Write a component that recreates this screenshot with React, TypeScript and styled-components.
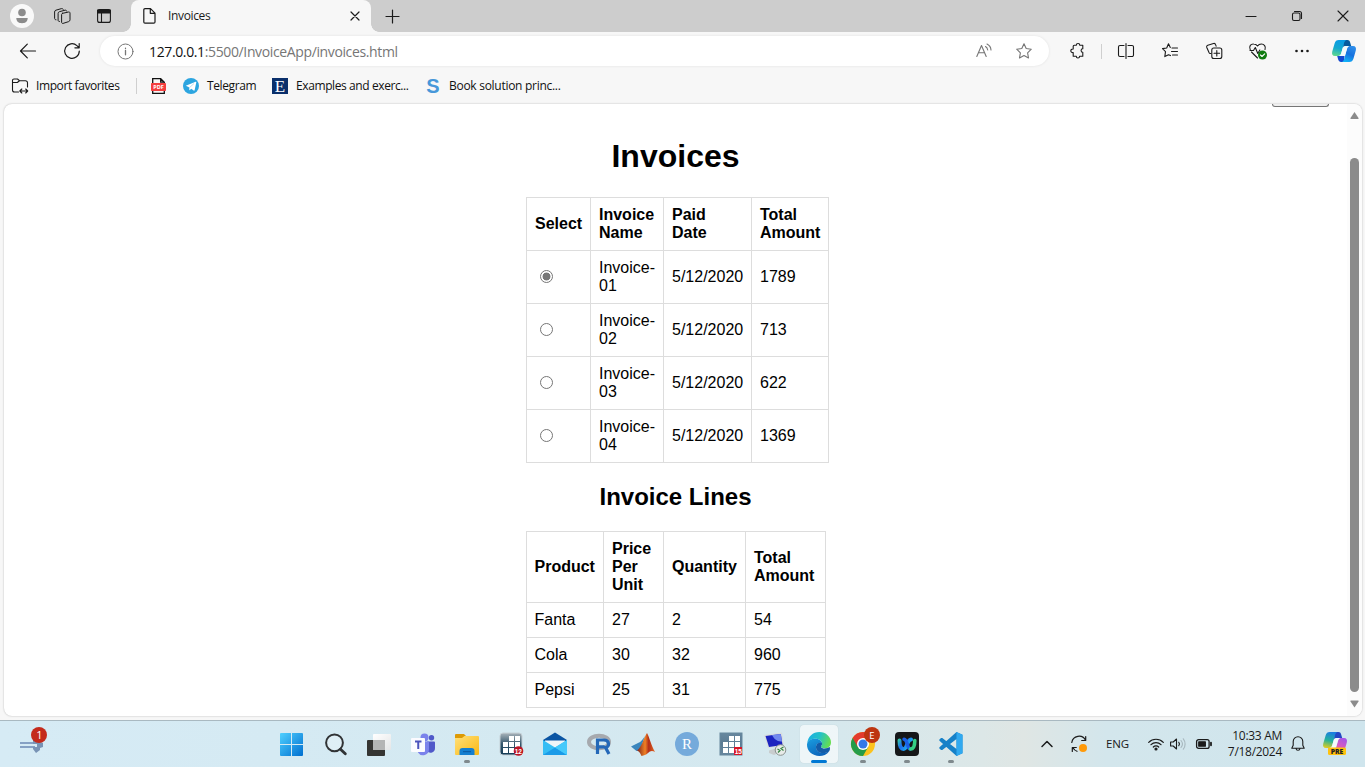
import React from 'react';
import styled, { createGlobalStyle } from 'styled-components';

const Global = createGlobalStyle`
  * { box-sizing: border-box; }
  html, body { margin: 0; padding: 0; overflow: hidden; }
  body { font-family: "Open Sans", "Noto Sans", sans-serif; font-size: 12px; color: #1b1b1b; background: #f7f7f7; }
  svg { display: block; overflow: visible; }
`;

const Screen = styled.div`
  width: 1365px;
  height: 767px;
  display: flex;
  flex-direction: column;
  background: #f7f7f7;
`;

const TabStrip = styled.header`
  height: 32px;
  background: #cdcdcd;
  display: flex;
  flex: none;
`;

const Cell = styled.div<{ $w: number }>`
  width: ${(p) => p.$w}px;
  height: 100%;
  flex: none;
  display: flex;
  align-items: center;
  justify-content: center;
`;

const Tab = styled.div`
  position: relative;
  width: 240px;
  background: #f7f7f7;
  border-radius: 8px 8px 0 0;
  display: flex;
  align-items: center;
  padding: 0 9px 0 12px;
  flex: none;
  &::before, &::after {
    content: '';
    position: absolute;
    bottom: 0;
    width: 8px;
    height: 8px;
  }
  &::before { left: -8px; background: radial-gradient(circle at 0 0, transparent 7.5px, #f7f7f7 8px); }
  &::after { right: -8px; background: radial-gradient(circle at 100% 0, transparent 7.5px, #f7f7f7 8px); }
`;

const Label = styled.span<{ $track?: number; $size?: number }>`
  font-size: ${(p) => p.$size ?? 12}px;
  letter-spacing: ${(p) => p.$track ?? 0}px;
  line-height: 16px;
  padding-bottom: 1px;
  white-space: nowrap;
`;

const TabTitle = styled(Label)`
  margin-left: 12px;
  flex: 1;
`;

const Spacer = styled.div`
  flex: 1;
`;

const Toolbar = styled.div`
  height: 38px;
  display: flex;
  align-items: center;
  flex: none;
  padding-left: 6px;
`;

const AddressBar = styled.div`
  width: 949px;
  height: 30px;
  margin-left: 6px;
  margin-right: 6px;
  border-radius: 15px;
  background: #fff;
  box-shadow: 0 0 3px rgba(0, 0, 0, 0.09);
  display: flex;
  align-items: center;
  padding: 0 5px 0 17px;
  flex: none;
`;

const Url = styled.div`
  flex: 1;
  margin-left: 15px;
  font-size: 14px;
  letter-spacing: -0.37px;
  color: #767676;
  b { font-weight: 400; color: #111; }
`;

const Rule = styled.i<{ $h: number }>`
  width: 1px;
  height: ${(p) => p.$h}px;
  background: #cfcfcf;
  flex: none;
`;

const Favorites = styled.nav`
  height: 34px;
  flex: none;
  display: flex;
  align-items: center;
  padding: 0 0 2px 12px;
`;

const Favorite = styled.div<{ $w: number; $gap?: number }>`
  width: ${(p) => p.$w}px;
  flex: none;
  display: flex;
  align-items: center;
  gap: ${(p) => p.$gap ?? 8}px;
  color: #111;
`;

const PdfLink = styled.div`
  margin: 0 17px 0 14px;
`;

const Viewport = styled.main`
  width: 1358px;
  height: 612px;
  margin-left: 4px;
  flex: none;
  background: #fff;
  border-radius: 8px;
  box-shadow: 0 0 2px rgba(0, 0, 0, 0.28);
  display: flex;
  overflow: hidden;
`;

const Document = styled.div`
  flex: 1;
  display: flex;
  flex-direction: column;
  align-items: center;
  font-family: "Liberation Sans", Arial, sans-serif;
  font-size: 16px;
  line-height: 18px;
  color: #000;
`;

const ClippedButton = styled.div`
  align-self: flex-end;
  width: 57px;
  height: 3px;
  margin-right: 18px;
  border: 1px solid #767676;
  border-top: 0;
  border-radius: 0 0 3px 3px;
  background: #efefef;
`;

const Content = styled.section`
  width: 300px;
  padding-top: 31px;
`;

const Title = styled.h1`
  margin: 0 0 22px;
  text-align: center;
  font-size: 32px;
  line-height: 37px;
`;

const Subtitle = styled.h2`
  margin: 20px 0;
  text-align: center;
  font-size: 24px;
  line-height: 28px;
`;

const Grid = styled.table<{ $w: number }>`
  width: ${(p) => p.$w}px;
  table-layout: fixed;
  border-collapse: collapse;
  th, td { border: 1px solid #ddd; padding: 8px 7.5px 8px 8.5px; text-align: left; overflow-wrap: normal; }
  th:first-child { padding-left: ${(p) => (p.$w > 300 ? 8.5 : 8)}px; padding-right: 7px; }
  td:first-child { padding-left: 8px; }
`;

const Col = styled.col<{ $w: number }>`
  width: ${(p) => p.$w}px;
`;

const Radio = styled.input`
  appearance: none;
  display: block;
  width: 13px;
  height: 13px;
  margin: -1px 0 1px 5px;
  border: 1px solid #767676;
  border-radius: 50%;
  background: #fff;
  &:checked { background: radial-gradient(circle, #767676 3.6px, #fff 4.3px); }
`;

const ScrollTrack = styled.div`
  width: 15px;
  background: #fcfcfc;
  display: flex;
  flex-direction: column;
  align-items: center;
  padding: 8px 0;
`;

const Thumb = styled.div`
  width: 9px;
  height: 536px;
  margin: 38px 0 8px;
  border-radius: 5px;
  background: #8b8b8b;
`;

const Taskbar = styled.footer`
  margin-top: 4px;
  height: 47px;
  flex: none;
  border-top: 1px solid #a9b9c1;
  background: linear-gradient(90deg, #d6ebf5 0%, #d4e9f1 40%, #d5e8ee 60%, #dce7e7 72%, #dfe6e4 75%, #d3e6ec 81%, #cfe5ed 100%);
  display: flex;
`;

const WidgetArea = styled.div`
  width: 269px;
  padding: 6px 0 0 20px;
`;

const AppSlot = styled.div<{ $active?: boolean }>`
  position: relative;
  width: 38px;
  height: 38px;
  margin: 4px 3px;
  border-radius: 4px;
  background: ${(p) => (p.$active ? 'rgba(255,255,255,.6)' : 'transparent')};
  box-shadow: ${(p) => (p.$active ? '0 0 1px rgba(0,0,0,.18)' : 'none')};
  display: flex;
  align-items: center;
  justify-content: center;
`;

const Running = styled.i<{ $active?: boolean }>`
  position: absolute;
  bottom: 0;
  left: 50%;
  transform: translateX(-50%);
  width: ${(p) => (p.$active ? 16 : 6)}px;
  height: 3px;
  border-radius: 2px;
  background: ${(p) => (p.$active ? '#0078d4' : '#7f898d')};
`;

const Tray = styled.div`
  margin-left: auto;
  margin-right: 7px;
  display: flex;
`;

const Clock = styled.div`
  width: 60px;
  text-align: right;
  font-size: 12px;
  line-height: 16px;
  letter-spacing: -0.3px;
  padding-top: 7px;
  white-space: nowrap;
`;

type IconProps = { w?: number; h?: number; vb?: string; c?: string; sw?: number; children: React.ReactNode };
const Icon = ({ w = 16, h = w, vb, c = '#1b1b1b', sw = 1.1, children }: IconProps) => (
  <svg width={w} height={h} viewBox={vb ?? `0 0 ${w} ${h}`} fill="none" stroke={c} strokeWidth={sw} strokeLinecap="round" strokeLinejoin="round">
    {children}
  </svg>
);

const Profile = () => (
  <Icon w={24}>
    <g stroke="none"><circle cx="12" cy="12" r="12" fill="#f9f9f9" /><circle cx="12" cy="8.5" r="3.8" fill="#8c8c8c" />
    <path d="M6.3 14h11.4c0 3.5-2.4 5.2-5.700 5.200S6.300 17.500 6.300 14Z" fill="#8c8c8c" /></g>
  </Icon>
);
const Workspaces = () => (
  <Icon w={16} sw={1}>
    <path d="M8.600 5.300 14.600 4c.8-.2 1.400.3 1.400 1.100v6.700c0 .9-.5 1.500-1.300 1.800l-5.600 1.800c-.8.2-1.500-.3-1.500-1.200V6.700c0-.8.3-1.200 1-1.400Z" />
    <path d="M5.500 13.500c-.9 0-1.400-.5-1.400-1.300V5.500c0-1 .5-1.600 1.300-1.800l5.600-1.500c.9-.2 1.500.2 1.700.9" />
    <path d="M2 11.800c-.8 0-1.400-.5-1.400-1.300V4c0-1 .5-1.600 1.300-1.800L7.500.6c.9-.2 1.500.2 1.700.8" />
  </Icon>
);
const TabActions = () => (
  <Icon w={14}>
    <rect x=".6" y=".6" width="12.800" height="12.800" rx="2" />
    <path d="M.6 1h12.800v3H.6z" fill="#1b1b1b" /><path d="M4.500 4v9" />
  </Icon>
);
const FileIcon = () => (
  <Icon w={13} h={16} sw={1.2}><path d="M2 .7h5.500L12 5.200V14a1.200 1.200 0 0 1-1.200 1.200H2A1.200 1.200 0 0 1 .8 14V1.900C.8 1.200 1.300.7 2 .7ZM7.300.8v4.500h4.600" /></Icon>
);
const Cross = ({ s = 8, sw = 1.2 }: { s?: number; sw?: number }) => <Icon w={s} sw={sw}><path d={`M0 0L${s} ${s}M${s} 0L0 ${s}`} /></Icon>;

const CopilotMark = ({ rainbow }: { rainbow?: boolean }) => {
  const id = rainbow ? 'cr' : 'cb';
  return (
    <svg width="24" height="22" viewBox="0 0 24 22">
      <defs>
        <linearGradient id={`${id}1`} x1=".4" y1="0" x2=".2" y2="1">
          {(rainbow ? ['#1b7ee0', '#24b29b', '#e6cc1c'] : ['#0a9be4', '#14a8cf', '#62d98c']).map((s, i) => <stop key={s} offset={i / 2} stopColor={s} />)}
        </linearGradient>
        <linearGradient id={`${id}2`} x1=".7" y1="0" x2=".3" y2="1">
          {(rainbow ? ['#a455e8', '#d65bc0', '#ff7d68'] : ['#2f8eea', '#1672df', '#12b4f8']).map((s, i) => <stop key={s} offset={i / 2} stopColor={s} />)}
        </linearGradient>
      </defs>
      <path d="M11 0h4.500c1.400 0 2.200.8 2.600 2.200L19.200 6H14c-1.500 0-2.200.8-2.800 2Z" fill={rainbow ? '#2447c4' : '#075a9d'} />
      <path d="M12.500 16H5.200l1 3.600C6.700 21.300 7.500 22 9 22h3Z" fill={rainbow ? '#e858a6' : '#1548d0'} />
      <path d="M6.800 0H14.500c-1.500.5-2.200 2-2.700 4L9.300 13c-.6 2.200-1.500 3-3.300 3H3C.5 16-.4 14.200.2 11.700L2.600 3.500C3.300 1.100 4.600 0 6.800 0Z" fill={`url(#${id}1)`} />
      <path d="M17.800 6H21c2.500 0 3.500 2 2.800 4.500l-2.300 8c-.7 2.400-2 3.500-4.200 3.500H9.800c1.500-.5 2.200-2 2.700-4L15 9c.6-2.200 1.200-3 2.800-3Z" fill={`url(#${id}2)`} />
      <path d="M13.500 6h3.700c-1.400.5-1.900 1.500-2.500 3.500l-1.200 4c-.5 1.800-1.300 2.500-2.800 2.500H7c1.300-.5 1.900-1.500 2.400-3.200l1.300-4.600C11.200 6.700 12 6 13.500 6Z" fill="#f4fafb" />
    </svg>
  );
};

const CalendarApp = ({ day }: { day: string }) => {
  const old = day === '12';
  return (
    <svg width="24" height="24" viewBox="0 0 24 24">
      <defs><linearGradient id={`cal${day}`} x2="0" y2="1"><stop stopColor={old ? '#a9b4bb' : '#67879e'} /><stop offset=".5" stopColor={old ? '#36576c' : '#5b7b93'} /><stop offset="1" stopColor={old ? '#123a55' : '#67879e'} /></linearGradient></defs>
      <rect x="1" y="1" width="22" height="22" rx={old ? 3 : 0} fill={`url(#cal${day})`} stroke={old ? '#c5d0d6' : '#67879e'} />
      {[[10, 4], [16, 4], [4, 10], [10, 10], [16, 10], [4, 16], [10, 16]].map(([x, y]) => <rect key={`${x}-${y}`} x={x} y={y} width="5" height="5" fill="#fff" />)}
      {old ? <circle cx="19.500" cy="19" r="4.800" fill="#bd1525" /> : <rect x="15" y="15" width="8" height="8" fill="#d91525" />}
      <text x="19.300" y="21.500" textAnchor="middle" fontSize="6.500" fontWeight="700" fill="#fff" fontFamily="Liberation Sans">{day}</text>
    </svg>
  );
};

const Windows = () => (
  <svg width="23" height="23" viewBox="0 0 23 23"><defs><linearGradient id="win" x2="1" y2="1"><stop stopColor="#4fd0ff" /><stop offset="1" stopColor="#006fd0" /></linearGradient></defs>
    <path d="M1 0h10v11H0V1a1 1 0 0 1 1-1ZM12 0h10a1 1 0 0 1 1 1v10H12ZM0 12h11v11H1a1 1 0 0 1-1-1ZM12 12h11v10a1 1 0 0 1-1 1H12Z" fill="url(#win)" /></svg>
);
const Search = () => <Icon w={23} c="#303335" sw={2}><circle cx="10.500" cy="9.800" r="8.400" fill="rgba(255,255,255,.25)" /><path d="m16.500 16.200 4.800 4.500" strokeWidth="2.900" /></Icon>;
const TaskView = () => (
  <svg width="24" height="23"><defs><linearGradient id="tv" x2="1" y2="1"><stop stopColor="#fff" /><stop offset="1" stopColor="#e4e6e7" /></linearGradient></defs>
    <rect y="7" width="18" height="16" rx="1" fill="#353533" /><rect x="6" y="1" width="18" height="16" rx="1" fill="url(#tv)" /><path d="M6 7h12v10H6z" fill="#b4b5b5" /></svg>
);
const Teams = () => (
  <svg width="24" height="23"><circle cx="20.500" cy="4.800" r="2.700" fill="#5059c9" /><circle cx="13.500" cy="4.500" r="4" fill="#7b83eb" />
    <path d="M16 8.500h7a1 1 0 0 1 1 1V15a4.500 4.500 0 0 1-8 3Z" fill="#5059c9" /><path d="M8 8.500h10V16a6 6 0 0 1-11 3.500Z" fill="#7b83eb" />
    <rect y="5" width="14" height="14" rx="1" fill="#fbfbff" /><path d="M4 8.500h6.500M7.250 8.500V16" stroke="#4b53bc" strokeWidth="2" fill="none" /></svg>
);
const Explorer = () => (
  <svg width="24" height="23"><defs><linearGradient id="fo" x2="1" y2="1"><stop stopColor="#ffe07a" /><stop offset="1" stopColor="#fbb813" /></linearGradient></defs>
    <path d="M1 1h8l2 2v4H0V2a1 1 0 0 1 1-1Z" fill="#dd9a05" /><path d="M0 5h7l2.500-2H23a1 1 0 0 1 1 1v17a1 1 0 0 1-1 1H1a1 1 0 0 1-1-1Z" fill="url(#fo)" />
    <path d="M4.500 22v-4a3 3 0 0 1 3-3h9a3 3 0 0 1 3 3v4Z" fill="#147fd0" /><path d="M8 18.700h8" stroke="#0b579f" /></svg>
);
const Mail = () => (
  <svg width="24" height="24"><path d="M0 8 12 .5 24 8v5H0Z" fill="#0b55a3" /><path d="M2 8.500h20V15H2Z" fill="#f1f5f8" /><path d="m0 8 12 7.500L24 8v15H0Z" fill="#36bdf4" /><path d="m0 23 12-7.500L24 23Z" fill="#1b9be8" /><path d="m24 8-12 7.500L24 23Z" fill="#46c9fb" /></svg>
);
const RLang = () => (
  <svg width="25" height="20"><ellipse cx="12" cy="8" rx="10" ry="6.300" fill="none" stroke="#a6a9ae" strokeWidth="4" /><path d="M10.500 20V6h6.300c6 0 6 7 1.700 7.500L22 20M11 12.800h6.500" fill="none" stroke="#2468b8" strokeWidth="3.200" /></svg>
);
const Matlab = () => (
  <svg width="24" height="23"><defs><linearGradient id="ml" x2="1"><stop stopColor="#7d211b" /><stop offset=".45" stopColor="#ef8124" /><stop offset=".65" stopColor="#b22d18" /><stop offset="1" stopColor="#e66a22" /></linearGradient></defs>
    <path d="M0 13.500 7 10c3-1 5-4 7-7L9 17l-3.500 1Z" fill="#3a86bd" /><path d="M16 0c2 3 4 12 8 19-3-2-5-1-7 1-2 2-4 2.500-6.500 3C9 19.500 8 18.500 6 17.500 11 14 13 4 16 0Z" fill="url(#ml)" /></svg>
);
const RStudio = () => (
  <svg width="24" height="24"><circle cx="12" cy="12" r="12" fill="#75aadb" /><text x="12" y="17" textAnchor="middle" fontFamily="Liberation Serif" fontSize="15" fill="#fff">R</text></svg>
);
const Remote = () => (
  <svg width="24" height="24"><path d="m1 3 18-2.500 2 13L5 16Z" fill="#d8dddf" /><path d="m2.500 4 15.300-2.100L19.500 13 6 15Z" fill="#1c24c0" /><path d="m9 3.100 8.800-1.200 1.200 7.600C14 10 11 7 9 3.100Z" fill="#7189ef" /><path d="m6 18.500 8-2.500 6 3-9 4-5-2Z" fill="#c8cdce" /><circle cx="17.500" cy="18" r="5.300" fill="#e7ebe8" stroke="#8b9390" /><path d="m14.500 17 2.500 1.500-2 2M20.500 15l-2.500 1.500 2.500 2" fill="none" stroke="#328440" strokeWidth="1.200" /></svg>
);
const Edge = () => (
  <svg width="24" height="24"><defs>
    <linearGradient id="ed1" x1="0" y1=".2" x2="1" y2=".5"><stop stopColor="#1caee5" /><stop offset=".5" stopColor="#24c2c6" /><stop offset="1" stopColor="#65dd50" /></linearGradient>
    <linearGradient id="ed2" x1="0" y1="0" x2=".6" y2="1"><stop stopColor="#1b9fe0" /><stop offset="1" stopColor="#0b63ba" /></linearGradient></defs>
    <path d="M.3 11.500C.6 4.500 6 0 12.300 0 19 0 24 5 24 10.300c0 4-3 6-6.300 6-3 0-4-1.200-3.700-2 .5-.8 1-1.300 1-2.600C15 9 12 6.800 8.500 6.800 4 6.800.9 9 .3 11.500Z" fill="url(#ed1)" />
    <path d="M0 12.500C.5 8.500 4 6.800 8.300 6.800c3.500 0 6.200 2 6.700 4.500-1-1.300-5.500-.8-6 3.200-.6 4.500 4.500 7.500 9.500 6.200 1.500-.4 2.700-.9 3.500-1.200C20 22.500 16 24 12.500 24 5.500 24-.3 19 0 12.500Z" fill="url(#ed2)" />
    <path d="M9 14.500c.2-2.500 3-4.300 5.700-3.800 1.200 1.800-.7 3-.7 3.700-.2 1.600 2 2 3.700 2 2 0 3.600-.6 4.800-1.600.8 1.500.7 3.200-.5 4.700C16.500 22.800 8.500 21 9 14.500Z" fill="#135ca8" /></svg>
);
const Chrome = () => (
  <svg width="24" height="24"><circle cx="12" cy="12" r="12" fill="#fcc31e" /><path d="M12 12 1.600 6a12 12 0 0 0 10.400 18l5.200-9Z" fill="#259c49" /><path d="M12 0A12 12 0 0 0 1.600 6l5.200 9L12 6h10.400A12 12 0 0 0 12 0Z" fill="#e33b2e" /><circle cx="12" cy="12" r="6" fill="#fff" /><circle cx="12" cy="12" r="4.500" fill="#3478e8" />
    <circle cx="21" cy="3" r="8" fill="#bd3510" /><text x="21" y="6.500" textAnchor="middle" fontFamily="Open Sans" fontSize="9.500" fill="#fff">E</text></svg>
);
const Webex = () => (
  <svg width="24" height="24"><defs><linearGradient id="wx" gradientUnits="userSpaceOnUse" x1="3" y1="7" x2="18" y2="17"><stop stopColor="#35d3a0" /><stop offset=".35" stopColor="#1c6df0" /><stop offset=".7" stopColor="#20a8ee" /><stop offset="1" stopColor="#2bc7e0" /></linearGradient></defs><rect width="24" height="24" rx="4" fill="#151719" />
    <path d="M4.500 8.500c0 4.500 1 8.500 4 8.500 3.800 0 3.500-9.500 7.500-9.500" fill="none" stroke="url(#wx)" strokeWidth="4" strokeLinecap="round" />
    <path d="M9 7.300c3.800.5 3 9.700 6.500 9.700" fill="none" stroke="#1a5fe6" strokeWidth="3.500" strokeLinecap="round" />
    <path d="M19.800 8.500c0 4.500-1.300 8.500-4.300 8.500" fill="none" stroke="#35cf85" strokeWidth="3.600" strokeLinecap="round" /></svg>
);
const VsCode = () => (
  <svg width="24" height="24"><path d="m17.500 0 6 2.800v18.400l-6 2.800L1 9.300 0 8l2-1.900L3.300 6 17.500 17V7L3.300 18 2 17.900 0 16l1-1.300Z" fill="#1681c8" /><path d="m17.500 0 6 2.800v18.400l-6 2.800Z" fill="#30a9f0" /></svg>
);

const taskbarApps = [
  { name: 'start', art: <Windows /> },
  { name: 'search', art: <Search /> },
  { name: 'taskview', art: <TaskView /> },
  { name: 'teams', art: <Teams /> },
  { name: 'explorer', art: <Explorer />, running: true },
  { name: 'calendar', art: <CalendarApp day="12" /> },
  { name: 'mail', art: <Mail /> },
  { name: 'rlang', art: <RLang /> },
  { name: 'matlab', art: <Matlab /> },
  { name: 'rstudio', art: <RStudio /> },
  { name: 'calendar2', art: <CalendarApp day="15" /> },
  { name: 'remote', art: <Remote /> },
  { name: 'edge', art: <Edge />, running: true, active: true },
  { name: 'chrome', art: <Chrome />, running: true },
  { name: 'webex', art: <Webex />, running: true },
  { name: 'vscode', art: <VsCode />, running: true },
];

const invoices = [
  { name: 'Invoice-01', date: '5/12/2020', total: 1789 },
  { name: 'Invoice-02', date: '5/12/2020', total: 713 },
  { name: 'Invoice-03', date: '5/12/2020', total: 622 },
  { name: 'Invoice-04', date: '5/12/2020', total: 1369 },
];

const lines = [
  ['Fanta', 27, 2, 54],
  ['Cola', 30, 32, 960],
  ['Pepsi', 25, 31, 775],
];

const star = 'M8 .8l2.200 4.700 5.100.7-3.700 3.600.9 5.100L8 12.500l-4.500 2.400.9-5.100L.7 6.200l5.100-.7Z';

export default function App() {
  return (
    <Screen>
      <Global />
      <TabStrip>
        <Cell $w={44}><Profile /></Cell>
        <Cell $w={36}><Workspaces /></Cell>
        <Cell $w={48}><TabActions /></Cell>
        <Cell $w={3} />
        <Tab>
          <FileIcon />
          <TabTitle $track={-0.35}>Invoices</TabTitle>
          <Cell $w={14}><Cross /></Cell>
        </Tab>
        <Cell $w={43}><Icon w={13} sw={1.2}><path d="M6.500 0v13M0 6.500h13" /></Icon></Cell>
        <Spacer />
        <Cell $w={46}><Icon w={10}><path d="M0 5.500h10" /></Icon></Cell>
        <Cell $w={46}><Icon w={10}><rect x=".5" y="2" width="7.500" height="7.500" rx="1.500" /><path d="M2.500.5H7.500a2 2 0 0 1 2 2V7.500" /></Icon></Cell>
        <Cell $w={45}><Cross s={10} sw={1.1} /></Cell>
      </TabStrip>

      <Toolbar>
        <Cell $w={44}><Icon w={16} sw={1.2}><path d="M15.500 8H.8M7.300 1.200.5 8l6.800 6.800" /></Icon></Cell>
        <Cell $w={44}><Icon w={16} sw={1.2}><path d="M15.300 8a7.300 7.300 0 1 1-2.400-5.400L15 4.600M15.200.5v4.300h-4.300" /></Icon></Cell>
        <AddressBar>
          <Icon w={17} c="#767676" sw={1}><circle cx="8.500" cy="8.500" r="7.500" /><path d="M8.500 7.500v4.300M8.500 5.200v.3" strokeWidth="1.300" /></Icon>
          <Url><b>127.0.0.1</b>:5500/InvoiceApp/invoices.html</Url>
          <Cell $w={40}><Icon w={16} c="#767676"><path d="M.8 13.500 5.500 2.500l4.700 11M2.500 9.800h6M9.500 3.500c1.300.8 2 2 2.200 3.500M11 1c2.400 1.200 3.800 3.200 4 6" /></Icon></Cell>
          <Cell $w={40}><Icon w={16} c="#767676"><path d={star} /></Icon></Cell>
        </AddressBar>
        <Cell $w={44}><Icon w={16}><path d="M5.300 2.500h2c0-2.300 3.500-2.300 3.500 0h3v3.600c-2.300 0-2.300 3.600 0 3.600v3.800h-3.200c0 2.300-3.300 2.300-3.300 0H4.200V9.900C1 10.200 1 6 4.200 6.300V3.500c0-.6.400-1 1.100-1Z" transform="translate(0 -.3)" /></Icon></Cell>
        <Cell $w={5}><Rule $h={15} /></Cell>
        <Cell $w={43}><Icon w={16}><path d="M6 2.500H2A1.500 1.500 0 0 0 .5 4v8A1.500 1.500 0 0 0 2 13.500h4M10 2.500h4A1.500 1.500 0 0 1 15.500 4v8a1.500 1.500 0 0 1-1.500 1.500h-4M8 .5v15" /></Icon></Cell>
        <Cell $w={45}><Icon w={16}><path d="M8.300 4.500 6.500.8 4.700 5 .5 5.600l3 3-.7 5L6.500 11.700l2 .9M10 5h5.500M9.500 8.500h6M10.500 12h5" /></Icon></Cell>
        <Cell $w={44}><Icon w={16}><path d="M5 10.500c-1 .2-1.800-.3-2.100-1.200L.8 4.500C.4 3.500.8 2.600 1.800 2.200L7.500.5c1-.3 1.800.2 2.100 1.200l.5 1.500" /><rect x="5.800" y="5" width="10" height="10.500" rx="2" /><path d="M10.800 7.500v5.500M8 10.300h5.600" /></Icon></Cell>
        <Cell $w={44}><Icon w={18} h={16}><path d="M1.300 7C-.5 3 2 .8 4.700 1 6.500 1 7.800 2 8.500 3c.7-1 2-2 3.900-2 2.600 0 4.800 2.300 3.600 5.500M2.500 9l6 6M1 7.500h3.500l1.800-3 2.500 6 2-3.500" /><circle cx="13.500" cy="12" r="4.500" fill="#107c10" stroke="none" /><path d="m11.500 12 1.500 1.500 2.700-2.700" stroke="#fff" /></Icon></Cell>
        <Cell $w={44}><Icon w={14} h={4}><g fill="#1b1b1b" stroke="none"><circle cx="1.500" cy="2" r="1.300" /><circle cx="7" cy="2" r="1.300" /><circle cx="12.500" cy="2" r="1.300" /></g></Icon></Cell>
        <Cell $w={40}><CopilotMark /></Cell>
      </Toolbar>

      <Favorites>
        <Favorite $w={124}>
          <Icon w={16}><path d="M6.500 14h-4A2 2 0 0 1 .5 12V2.500A1.500 1.500 0 0 1 2 1h3.500L7.500 2.700h6a2 2 0 0 1 2 2V9M.5 4.500h4.800L7.500 2.700M8 13h7.500M9.800 11l-2 2 2 2M13.700 11l2 2-2 2" /></Icon>
          <Label $track={-0.4}>Import favorites</Label>
        </Favorite>
        <Rule $h={16} />
        <PdfLink>
          <svg width="15" height="16"><path d="M1.700 5V.7h8l3.600 3.500V5M1.700 12v3.300h11.600V12M9.700.7v3.500h3.600" fill="none" stroke="#111" strokeWidth="1.300" /><rect y="5" width="15" height="8" rx=".7" fill="#f43f3f" /><text x="7.500" y="11" textAnchor="middle" fontFamily="Open Sans" fontWeight="700" fontSize="5.500" fill="#fff">PDF</text></svg>
        </PdfLink>
        <Favorite $w={89}>
          <svg width="16" height="16"><circle cx="8" cy="8" r="8" fill="#2ca5e0" /><path d="m2.800 7.800 9.800-4c.5-.2.8.1.700.6l-1.700 7.900c-.1.5-.5.6-.9.3L8.200 10.800 6.900 12c-.3.300-.6.200-.6-.2v-2L5.500 9Z" fill="#fff" /><path d="m6.300 9.800 4.700-4.300" stroke="#9ccfe9" strokeWidth=".7" /></svg>
          <Label $track={-0.4}>Telegram</Label>
        </Favorite>
        <Favorite $w={153}>
          <svg width="16" height="16"><rect width="16" height="16" fill="#0a2f6b" /><text x="8" y="13.500" textAnchor="middle" fontFamily="Liberation Serif" fontSize="17" fill="#fff">E</text></svg>
          <Label $track={-0.4}>Examples and exerc...</Label>
        </Favorite>
        <Favorite $w={150}>
          <svg width="16" height="16"><text x="8" y="15" textAnchor="middle" fontFamily="Liberation Sans" fontWeight="700" fontSize="20" fill="#4797d9">S</text></svg>
          <Label $track={-0.28}>Book solution princ...</Label>
        </Favorite>
      </Favorites>

      <Viewport>
        <Document>
          <ClippedButton />
          <Content>
            <Title>Invoices</Title>
            <Grid $w={303}>
              <colgroup>{[64, 73, 88, 77].map((w) => <Col key={w} $w={w} />)}</colgroup>
              <thead><tr><th>Select</th><th>Invoice Name</th><th>Paid Date</th><th>Total Amount</th></tr></thead>
              <tbody>
                {invoices.map((inv, i) => (
                  <tr key={inv.name}>
                    <td><Radio type="radio" name="invoice" defaultChecked={i === 0} /></td>
                    <td>{inv.name}</td><td>{inv.date}</td><td>{inv.total}</td>
                  </tr>
                ))}
              </tbody>
            </Grid>
            <Subtitle>Invoice Lines</Subtitle>
            <Grid $w={300}>
              <colgroup>{[77, 60, 82, 80].map((w) => <Col key={w} $w={w} />)}</colgroup>
              <thead><tr><th>Product</th><th>Price Per Unit</th><th>Quantity</th><th>Total Amount</th></tr></thead>
              <tbody>{lines.map((row) => <tr key={row[0]}>{row.map((v, i) => <td key={i}>{v}</td>)}</tr>)}</tbody>
            </Grid>
          </Content>
        </Document>
        <ScrollTrack>
          <svg width="9" height="8"><path d="M4.500 0 8.500 6Q9 7 8 7H1Q0 7 .5 6Z" fill="#8b8b8b" /></svg>
          <Thumb />
          <svg width="9" height="8"><path d="M4.500 7.500 8.500 1.500Q9 .5 8 .5H1Q0 .5.5 1.500Z" fill="#8b8b8b" /></svg>
        </ScrollTrack>
      </Viewport>

      <Taskbar>
        <WidgetArea>
          <svg width="28" height="26"><path d="M0 16h15M0 20h15" stroke="#86a1c4" strokeWidth="2" /><path d="M13 13c2-1 4 0 4 2h3l3 1v4l-3 1v2l-4 3-3-4v-2h4v-3h-4Z" fill="#7893b5" /><circle cx="19" cy="8" r="8" fill="#c42b1c" /><text x="19.500" y="12" textAnchor="middle" fontFamily="Open Sans" fontSize="11" fill="#fff">1</text></svg>
        </WidgetArea>
        {taskbarApps.map((app) => (
          <AppSlot key={app.name} $active={app.active}>
            {app.art}
            {app.running && <Running $active={app.active} />}
          </AppSlot>
        ))}
        <Tray>
          <Cell $w={32}><Icon w={10} h={6} sw={1.5}><path d="m0 5.500 5-5 5 5" /></Icon></Cell>
          <Cell $w={32}><Icon w={16} sw={1.2}><path d="M.8 6.500a7.300 7.300 0 0 1 13.700-2.300M14.700.5v4h-4M6 15.300a7.300 7.300 0 0 1-4-3.600M1.300 15.500v-4h4" /><circle cx="12" cy="12" r="4" fill="#ff9a0a" stroke="none" /></Icon></Cell>
          <Cell $w={45}><Label $size={11.5} $track={-0.2}>ENG</Label></Cell>
          <Cell $w={31}><Icon w={16} h={12} sw={1.2}><path d="M.7 4.300a10.300 10.300 0 0 1 14.600 0M3 6.700a7 7 0 0 1 10 0M5.300 9a3.800 3.800 0 0 1 5.400 0" /><circle cx="8" cy="11" r="1" fill="#1b1b1b" /></Icon></Cell>
          <Cell $w={14}><Icon w={16} h={12}><path d="M.6 4v4h2.600L6.500 11V1L3.200 4ZM8.800 4.300c.8 1 .8 2.400 0 3.400" /><path d="M11 2.500c1.700 2 1.700 5 0 7M13.300.8c2.400 3 2.400 7.400 0 10.400" stroke="#a8b8bf" /></Icon></Cell>
          <Cell $w={37}><Icon w={16} h={10} sw={1.3}><rect x=".6" y=".6" width="12.500" height="8.800" rx="2" /><rect x="2.800" y="2.800" width="6.500" height="4.400" fill="#1b1b1b" /><path d="M15 3.700v2.600" strokeWidth="1.800" /></Icon></Cell>
          <Clock>10:33 AM<br />7/18/2024</Clock>
          <Cell $w={32}><Icon w={14} h={16}><path d="M7 .8a4.800 4.800 0 0 0-4.800 4.800v3.600L.8 12.200h12.400l-1.400-3V5.600A4.800 4.800 0 0 0 7 .8ZM5 12.500c.3 2.300 3.700 2.300 4 0" /></Icon></Cell>
          <Cell $w={41}>
            <svg width="24" height="24"><CopilotMark rainbow /><rect x="5" y="15.500" width="18" height="7.500" rx="1.500" fill="#ffc20e" /><text x="14" y="21.800" textAnchor="middle" fontFamily="Open Sans" fontWeight="800" fontSize="6.800" fill="#222">PRE</text></svg>
          </Cell>
          <Cell $w={3} />
        </Tray>
      </Taskbar>
    </Screen>
  );
}
